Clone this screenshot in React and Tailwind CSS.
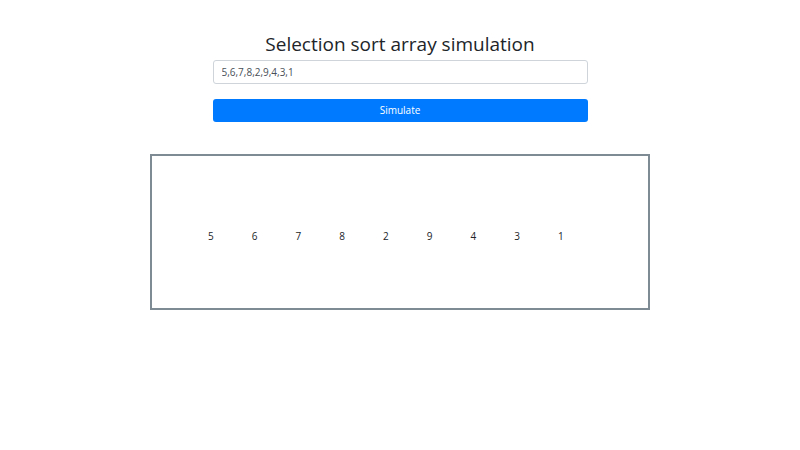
import React, { useState } from 'react';

export default function App() {
  const [value, setValue] = useState('5,6,7,8,2,9,4,3,1');
  const items = value.split(',').map((s) => s.trim()).filter(Boolean);

  return (
    <div className="w-[800px] h-[450px] bg-white text-[#212529] font-['Open_Sans',sans-serif]">
      <div className="flex flex-col items-center pt-[32px]">
        <h3 className="text-[19px] leading-[24px] text-[#212529]">Selection sort array simulation</h3>
        <input
          value={value}
          onChange={(e) => setValue(e.target.value)}
          className="mt-[4px] w-[375px] h-[24px] px-[8px] text-[10px] text-[#495057] border border-[#ced4da] rounded-[3px] outline-none"
        />
        <button className="mt-[15px] w-[375px] h-[23px] bg-[#007bff] text-white text-[10px] rounded-[3px]">
          Simulate
        </button>
      </div>
      <div className="mt-[32px] mx-auto w-[500px] h-[156px] border-2 border-[#7f8b94] flex items-center pl-[37px] pt-[8px]">
        {items.map((n, i) => (
          <div key={i} className="w-[43.75px] text-center text-[10px] text-[#212529]">
            {n}
          </div>
        ))}
      </div>
    </div>
  );
}
